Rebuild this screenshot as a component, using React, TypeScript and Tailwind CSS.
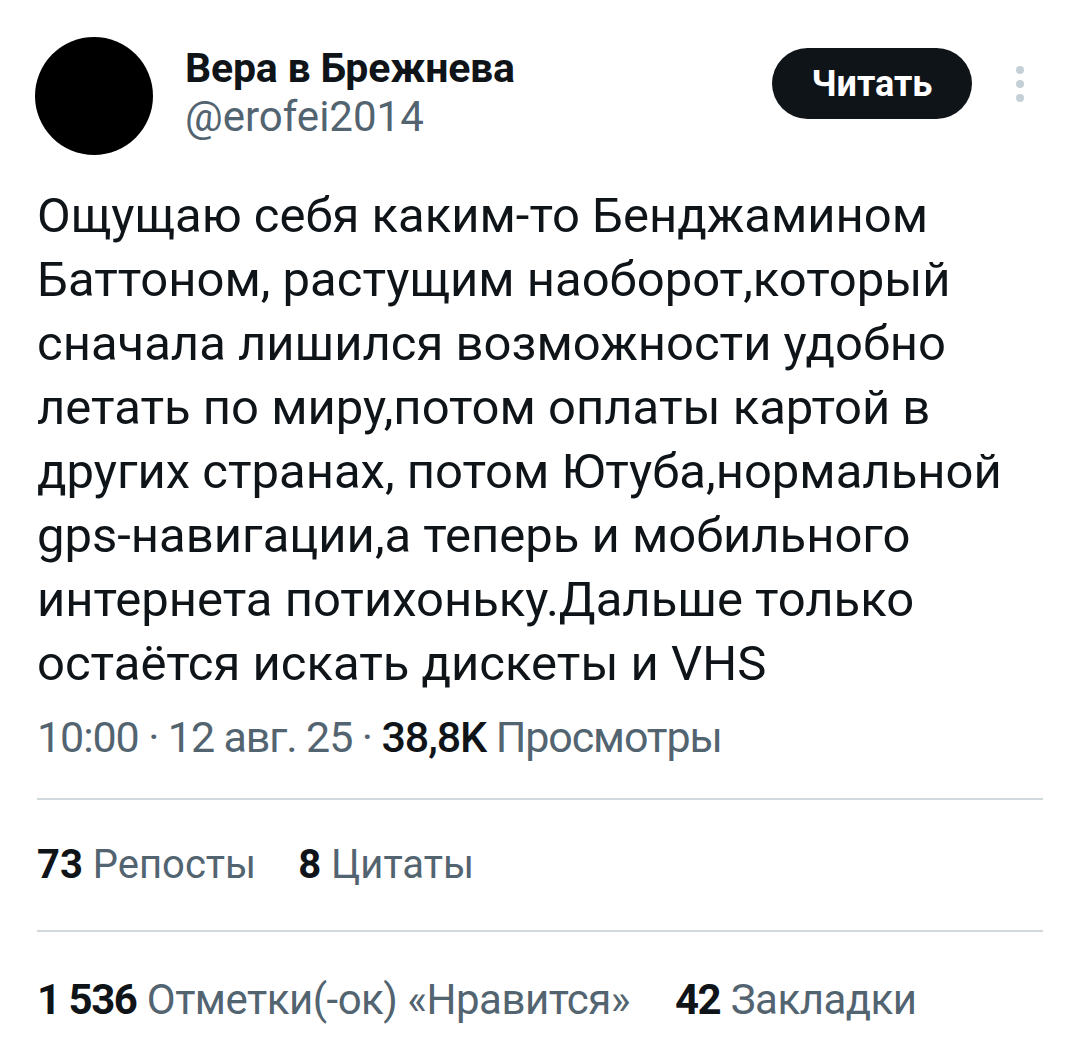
const lines = [
  'Ощущаю себя каким-то Бенджамином',
  'Баттоном, растущим наоборот,который',
  'сначала лишился возможности удобно',
  'летать по миру,потом оплаты картой в',
  'других странах, потом Ютуба,нормальной',
  'gps-навигации,а теперь и мобильного',
  'интернета потихоньку.Дальше только',
  'остаётся искать дискеты и VHS',
]

export default function App() {
  return (
    <div className="w-[1080px] h-[1056px] bg-white text-[#0f1419] font-['Roboto',sans-serif] overflow-hidden">
      {/* Header */}
      <div className="flex items-start pl-[35px] pr-[56px] pt-[37px]">
        <div className="w-[118px] h-[118px] rounded-full bg-black shrink-0" />
        <div className="ml-[32px] flex flex-col pt-[7px]">
          <span className="text-[41px] leading-[48px] font-bold tracking-[-0.2px]">Вера в Брежнева</span>
          <span className="text-[42px] leading-[50px] text-[#536471]">@erofei2014</span>
        </div>
        <div className="ml-auto flex items-center pt-[11px]">
          <button className="w-[200px] h-[71px] rounded-full bg-[#0f1419] text-white text-[36px] font-bold">
            Читать
          </button>
          <div className="ml-[44px] flex flex-col gap-[6px]">
            <span className="w-[8px] h-[8px] rounded-full bg-[#c4cfd6]" />
            <span className="w-[8px] h-[8px] rounded-full bg-[#c4cfd6]" />
            <span className="w-[8px] h-[8px] rounded-full bg-[#c4cfd6]" />
          </div>
        </div>
      </div>

      {/* Body */}
      <div className="px-[37px] pt-[29px] text-[49px] leading-[64px]">
        {lines.map((l) => (
          <div key={l} className="whitespace-nowrap">{l}</div>
        ))}
      </div>

      {/* Timestamp */}
      <div className="px-[37px] mt-[16px] text-[43px] leading-[50px] tracking-[-1.1px] text-[#536471] whitespace-nowrap">
        10:00 · 12 авг. 25 · <span className="text-[#0f1419] font-medium">38,8K</span> Просмотры
      </div>

      <div className="mx-[37px] mt-[36px] h-[2px] bg-[#cfd9de]" />

      {/* Reposts / quotes */}
      <div className="px-[37px] h-[130px] flex items-center gap-[42px] text-[40px] whitespace-nowrap">
        <span>
          <span className="font-bold">73</span> <span className="text-[#536471]">Репосты</span>
        </span>
        <span>
          <span className="font-bold">8</span> <span className="text-[#536471]">Цитаты</span>
        </span>
      </div>

      <div className="mx-[37px] h-[2px] bg-[#cfd9de]" />

      {/* Likes / bookmarks */}
      <div className="px-[37px] h-[134px] flex items-center gap-[45px] text-[42px] whitespace-nowrap">
        <span>
          <span className="font-bold tracking-[-1.5px]">1 536</span>{' '}
          <span className="text-[#536471] tracking-[-0.5px]">Отметки(-ок) «Нравится»</span>
        </span>
        <span>
          <span className="font-bold tracking-[-1.5px]">42</span>{' '}
          <span className="text-[#536471] tracking-[-0.5px]">Закладки</span>
        </span>
      </div>
    </div>
  )
}
